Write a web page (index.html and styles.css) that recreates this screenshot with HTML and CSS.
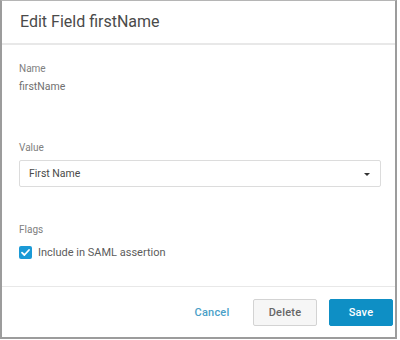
FILE: index.html
```html
<!DOCTYPE html>
<html lang="en">
<head>
  <meta charset="UTF-8">
  <meta name="viewport" content="width=device-width, initial-scale=1.0">
  <title>Edit Field firstName</title>
  <link rel="stylesheet" href="styles.css">
</head>
<body>
  <div class="dialog">
    <header class="dialog-header">
      <h1>Edit Field firstName</h1>
    </header>

    <div class="dialog-body">
      <!-- Name -->
      <div class="field field-name">
        <div class="field-label">Name</div>
        <div class="field-value">firstName</div>
      </div>

      <!-- Value -->
      <div class="field field-select">
        <div class="field-label">Value</div>
        <div class="select">
          <span>First Name</span>
          <span class="caret"></span>
        </div>
      </div>

      <!-- Flags -->
      <div class="field field-flags">
        <div class="field-label">Flags</div>
        <label class="check">
          <span class="check-box">
            <svg width="13" height="13" viewBox="0 0 13 13">
              <path d="M3 6.6 L5.4 9 L10 4" fill="none" stroke="#fff" stroke-width="1.8" stroke-linecap="round" stroke-linejoin="round"/>
            </svg>
          </span>
          Include in SAML assertion
        </label>
      </div>
    </div>

    <footer class="dialog-footer">
      <button class="btn btn-link">Cancel</button>
      <button class="btn btn-default">Delete</button>
      <button class="btn btn-primary">Save</button>
    </footer>
  </div>
</body>
</html>
```

FILE: styles.css
```css
:root {
  --frame: #9c9c9c;
  --line: #e8e8e8;
  --blue: #0e8fc5;
  --link: #4a9fc8;
  --label: #808080;
  --text: #5c5c5c;
}

* {
  margin: 0;
  padding: 0;
  box-sizing: border-box;
}

body {
  font-family: Roboto, "Liberation Sans", sans-serif;
  background: #ffffff;
  color: var(--text);
}

.dialog {
  width: 397px;
  height: 339px;
  border-top: 1px solid #b5b5b5;
  border-left: 2px solid var(--frame);
  border-right: 2px solid var(--frame);
  border-bottom: 2px solid var(--frame);
  display: flex;
  flex-direction: column;
}

.dialog-header {
  height: 44px;
  padding-left: 18px;
  border-bottom: 2px solid var(--line);
  display: flex;
  align-items: center;
}

.dialog-header h1 {
  font-size: 16px;
  font-weight: 400;
  color: #4a4a4a;
  margin-top: -1px;
}

.dialog-body {
  padding: 17px 14px 0 17px;
}

.field-label {
  font-size: 10px;
  line-height: 13px;
  color: var(--label);
}

.field-value {
  margin-top: 5px;
  font-size: 10.5px;
  line-height: 14px;
  color: #707070;
}

.field-select {
  margin-top: 47px;
}

.select {
  margin-top: 6px;
  height: 27px;
  border: 1px solid #dcdcdc;
  border-radius: 2px;
  padding: 0 10px 0 9px;
  display: flex;
  align-items: center;
  justify-content: space-between;
  font-size: 10.5px;
  color: #4a4a4a;
}

.caret {
  width: 0;
  height: 0;
  border-left: 3.5px solid transparent;
  border-right: 3.5px solid transparent;
  border-top: 3.5px solid #333333;
  margin-top: 1px;
}

.field-flags {
  margin-top: 36px;
}

.check {
  margin-top: 10px;
  display: flex;
  align-items: center;
  gap: 6px;
  font-size: 11px;
  line-height: 13px;
  color: var(--text);
}

.check-box {
  width: 13px;
  height: 13px;
  border-radius: 2px;
  background: #1b9ad6;
  display: flex;
}

.dialog-footer {
  margin-top: auto;
  border-top: 1px solid var(--line);
  padding: 12px 2px 11px 0;
  display: flex;
  justify-content: flex-end;
  gap: 12px;
}

.btn {
  height: 27px;
  border-radius: 2px;
  font-family: inherit;
  font-size: 11px;
  font-weight: 500;
  letter-spacing: 0.2px;
  cursor: pointer;
}

.btn-link {
  width: 58px;
  background: none;
  border: none;
  color: var(--link);
}

.btn-default {
  width: 64px;
  background: #f6f6f6;
  border: 1px solid #d3d3d3;
  color: #666666;
}

.btn-primary {
  width: 64px;
  background: var(--blue);
  border: 1px solid var(--blue);
  color: #ffffff;
}
```
